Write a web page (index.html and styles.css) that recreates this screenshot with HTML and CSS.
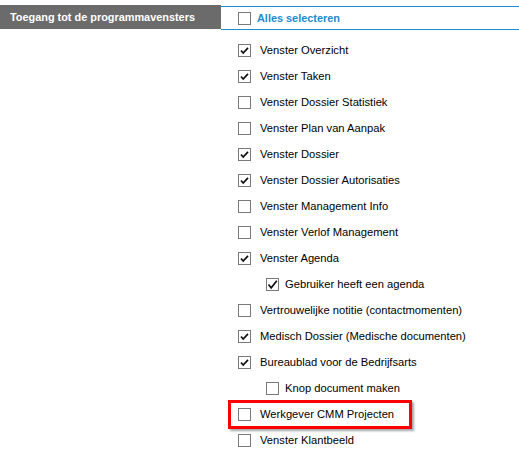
FILE: index.html
```html
<!DOCTYPE html>
<html>
<head>
<meta charset="utf-8">
<link rel="stylesheet" href="styles.css">
</head>
<body>
<div class="panel">
  <div class="head-label">Toegang tot de programmavensters</div>
  <div class="head-right">
    <span class="cb"></span>
    <span class="all">Alles selecteren</span>
  </div>
  <div class="left-col"></div>
  <ul class="list">
    <li class="item"><span class="cb on"><svg viewBox="0 0 11 11"><polyline points="2,5.5 4.2,8 9,2.8"/></svg></span><span class="lbl">Venster Overzicht</span></li>
    <li class="item"><span class="cb on"><svg viewBox="0 0 11 11"><polyline points="2,5.5 4.2,8 9,2.8"/></svg></span><span class="lbl">Venster Taken</span></li>
    <li class="item"><span class="cb"></span><span class="lbl">Venster Dossier Statistiek</span></li>
    <li class="item"><span class="cb"></span><span class="lbl">Venster Plan van Aanpak</span></li>
    <li class="item"><span class="cb on"><svg viewBox="0 0 11 11"><polyline points="2,5.5 4.2,8 9,2.8"/></svg></span><span class="lbl">Venster Dossier</span></li>
    <li class="item"><span class="cb on"><svg viewBox="0 0 11 11"><polyline points="2,5.5 4.2,8 9,2.8"/></svg></span><span class="lbl">Venster Dossier Autorisaties</span></li>
    <li class="item"><span class="cb"></span><span class="lbl">Venster Management Info</span></li>
    <li class="item"><span class="cb"></span><span class="lbl">Venster Verlof Management</span></li>
    <li class="item"><span class="cb on"><svg viewBox="0 0 11 11"><polyline points="2,5.5 4.2,8 9,2.8"/></svg></span><span class="lbl">Venster Agenda</span></li>
    <li class="item sub"><span class="cb on"><svg viewBox="0 0 11 11"><polyline points="1.5,5.5 4.2,8.8 9.8,1.8"/></svg></span><span class="lbl">Gebruiker heeft een agenda</span></li>
    <li class="item"><span class="cb"></span><span class="lbl">Vertrouwelijke notitie (contactmomenten)</span></li>
    <li class="item"><span class="cb on"><svg viewBox="0 0 11 11"><polyline points="2,5.5 4.2,8 9,2.8"/></svg></span><span class="lbl">Medisch Dossier (Medische documenten)</span></li>
    <li class="item"><span class="cb on"><svg viewBox="0 0 11 11"><polyline points="2,5.5 4.2,8 9,2.8"/></svg></span><span class="lbl">Bureaublad voor de Bedrijfsarts</span></li>
    <li class="item sub"><span class="cb"></span><span class="lbl">Knop document maken</span></li>
    <li class="item marked"><span class="cb"></span><span class="lbl">Werkgever CMM Projecten</span></li>
    <li class="item"><span class="cb"></span><span class="lbl">Venster Klantbeeld</span></li>
  </ul>
</div>
</body>
</html>
```

FILE: styles.css
```css
html, body {
  margin: 0;
  padding: 0;
  background: #fff;
}
body {
  padding-top: 5px;
  font-family: "Liberation Sans", Arial, sans-serif;
  font-size: 11.2px;
  color: #000;
}
.panel {
  display: grid;
  grid-template-columns: 221px 298px;
}
.head-label {
  height: 24px;
  background: #6b6b6b;
  color: #fff;
  font-weight: bold;
  font-size: 10.9px;
  padding-left: 10px;
  display: flex;
  align-items: center;
  box-sizing: border-box;
}
.head-right {
  margin-top: 1px;
  height: 24px;
  box-sizing: border-box;
  border-top: 1px solid #1a8fd3;
  border-bottom: 1px solid #1a8fd3;
  display: flex;
  align-items: center;
  padding-left: 17px;
}
.head-right .cb {
  margin-top: 1px;
}
.all {
  margin-left: 6px;
  color: #1a8ccf;
  font-weight: bold;
  font-size: 10.9px;
}
.list {
  list-style: none;
  margin: 0;
  padding: 7px 0 0 17px;
}
.item {
  height: 26px;
  display: flex;
  align-items: center;
  position: relative;
}
.item .lbl {
  margin-left: 9px;
}
.item.sub {
  padding-left: 28px;
}
.item.sub .lbl {
  margin-left: 6px;
}
.cb {
  width: 13px;
  height: 13px;
  box-sizing: border-box;
  border: 1px solid #7a7a7a;
  background: #fff;
  display: inline-block;
  flex: none;
}
.cb svg {
  display: block;
  width: 11px;
  height: 11px;
}
.cb polyline {
  fill: none;
  stroke: #111;
  stroke-width: 1.7;
}
.marked::before {
  content: "";
  position: absolute;
  left: -10px;
  top: -1px;
  width: 178px;
  height: 23px;
  border: 3px solid #f00;
  box-shadow: 2px 2px 2px rgba(0, 0, 0, 0.35);
}
```
